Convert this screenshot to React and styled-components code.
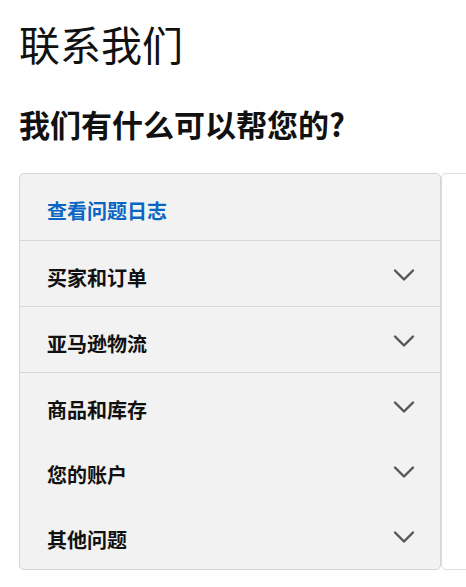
import React from 'react';
import styled, { createGlobalStyle } from 'styled-components';

const GlobalStyle = createGlobalStyle`
  html, body {
    margin: 0;
    padding: 0;
    background: #ffffff;
  }
  body {
    font-family: "Noto Sans CJK SC", "Noto Sans", "Liberation Sans", sans-serif;
    color: #111111;
  }
`;

const Page = styled.div`
  padding: 19px 0 0 19px;
  overflow: hidden;
`;

const Title = styled.h1`
  margin: 0;
  font-size: 41px;
  line-height: 48px;
  font-weight: 400;
  color: #111111;
`;

const SubTitle = styled.h2`
  margin: 39px 0 0;
  font-size: 31px;
  line-height: 36px;
  font-weight: 700;
  color: #111111;
`;

const Panels = styled.div`
  display: flex;
  margin-top: 31px;
  align-items: stretch;
`;

const HelpList = styled.div`
  flex: 0 0 422px;
  box-sizing: border-box;
  background: #f2f2f2;
  border: 1px solid #d5d5d5;
  border-radius: 5px;
`;

const DetailPane = styled.div`
  flex: 0 0 400px;
  box-sizing: border-box;
  background: #ffffff;
  border: 1px solid #dddddd;
  border-radius: 5px;
`;

const Row = styled.div`
  display: flex;
  align-items: center;
  justify-content: space-between;
  height: ${p => p.$height}px;
  box-sizing: border-box;
  padding: 0 24px 0 27px;
  border-bottom: ${p => (p.$divider ? '1px solid #d8d8d8' : 'none')};
`;

const Label = styled.span`
  padding-top: 7px;
  font-size: 20px;
  font-weight: 700;
  color: ${p => (p.$link ? '#0a66c2' : '#111111')};
`;

const ChevronIcon = styled.svg`
  display: block;
  margin-top: 2px;
`;

const Chevron = () => (
  <ChevronIcon width="24" height="14" viewBox="0 0 24 14" fill="none">
    <polyline
      points="3,2.5 12,11.5 21,2.5"
      stroke="#555555"
      strokeWidth="2.4"
      strokeLinecap="round"
      strokeLinejoin="round"
    />
  </ChevronIcon>
);

const topics = [
  { label: '买家和订单', divider: true, height: 66 },
  { label: '亚马逊物流', divider: true, height: 66 },
  { label: '商品和库存', height: 65 },
  { label: '您的账户', height: 65 },
  { label: '其他问题', height: 66 },
];

export default function App() {
  return (
    <Page>
      <GlobalStyle />
      <Title>联系我们</Title>
      <SubTitle>我们有什么可以帮您的?</SubTitle>
      <Panels>
        <HelpList>
          <Row $divider $height={67}>
            <Label $link>查看问题日志</Label>
          </Row>
          {topics.map(t => (
            <Row key={t.label} $divider={t.divider} $height={t.height}>
              <Label>{t.label}</Label>
              <Chevron />
            </Row>
          ))}
        </HelpList>
        <DetailPane />
      </Panels>
    </Page>
  );
}
